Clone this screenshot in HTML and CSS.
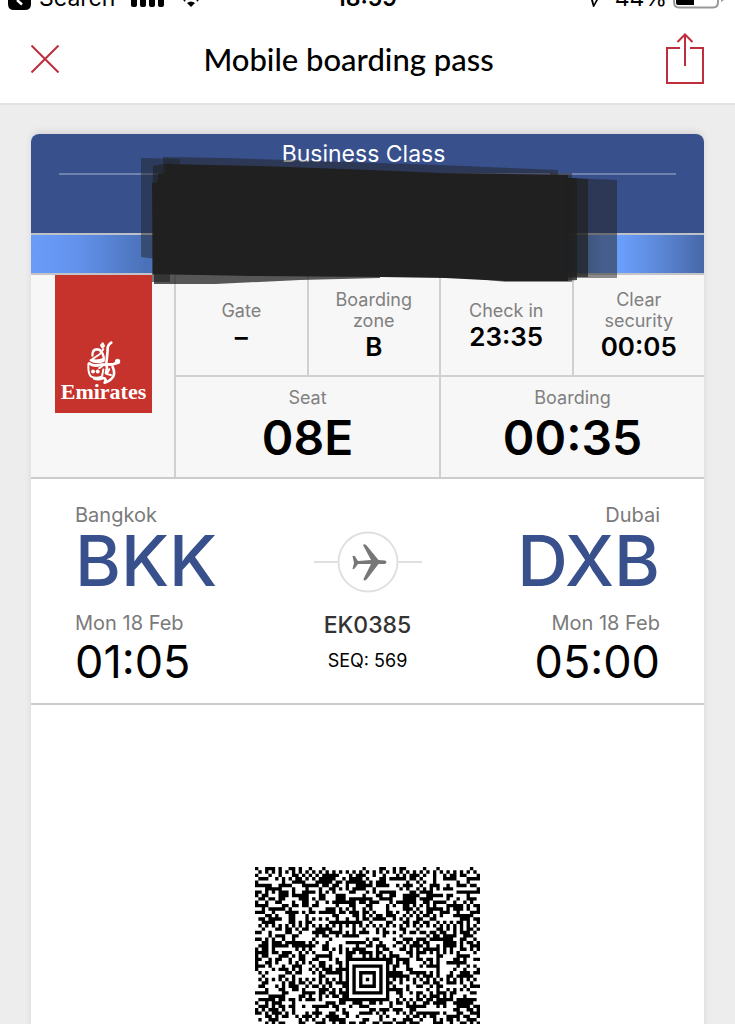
FILE: index.html
```html
<!DOCTYPE html>
<html lang="en">
<head>
  <meta charset="UTF-8" />
  <meta name="viewport" content="width=device-width, initial-scale=1.0"/>
  <title>Mobile boarding pass</title>
  <link rel="stylesheet" href="styles.css">
</head>
<body>
  <div class="app">
    <div class="status">
      <div class="status-left">
        <svg class="back-app" viewBox="0 0 23 12"><path d="M0 0H23V4Q23 10 17 10H6Q0 10 0 4Z"/><path d="M9 0L14 4.500" fill="none" stroke="#fff" stroke-width="2.500"/></svg>
        <span>Search</span>
        <svg class="signal" viewBox="0 0 34 12"><path d="M0 0h6v5q0 2-2 2h-2q-2 0-2-2zM9 0h6v5q0 2-2 2h-2q-2 0-2-2zM18 0h6v5q0 2-2 2h-2q-2 0-2-2zM27 0h6v5q0 2-2 2h-2q-2 0-2-2z"/></svg>
        <svg class="wifi" viewBox="0 0 16 12"><path d="M4 3Q8 0 12 3L8 7Z"/><path d="M1 1L2 0M15 1L14 0" stroke="#000" stroke-width="2"/></svg>
      </div>
      <div class="status-time"><span>18:59</span></div>
      <div class="status-right">
        <svg class="location" viewBox="0 0 8 12"><path d="M0 0H2L3 4L5 0H7L3 7H2Z"/></svg>
        <span>44%</span>
        <svg class="battery" viewBox="0 0 52 12"><path d="M1 0V2Q1 7.500 6 7.500H40Q45 7.500 45 2V0" fill="none" stroke="#999" stroke-width="2"/><path d="M3 0H21V5H5Q3 5 3 3Z"/><path d="M48 0H51L48 2Z" fill="#999"/></svg>
      </div>
    </div>

    <header class="topbar">
      <button class="icon-btn" aria-label="Close">
        <svg width="28" height="28" viewBox="0 0 28 28"><path d="M.5 .5L27.500 27.500M27.500 .5L.5 27.500"/></svg>
      </button>
      <h1>Mobile boarding pass</h1>
      <button class="icon-btn" aria-label="Share">
        <svg width="38" height="52" viewBox="0 0 38 52"><path d="M14 15H1V50H37V15H24M19 33V2M11.500 9L19 1.500L26.500 9"/></svg>
      </button>
    </header>

    <main class="content">
      <div class="pass">
        <div class="pass-top">
          <div class="cabin">Business Class</div>
          <!-- Passenger name hidden -->
          <svg class="scribble" viewBox="141 157 477 128">
            <path opacity=".45" d="M141 158L180 159V262L141 257Z"/>
            <path opacity=".5" d="M163 157L225 158L440 165L558 170V260H163Z"/>
            <path opacity=".6" d="M153 166L170 163V282H152Z"/>
            <path d="M152 183L158 182V174L165 173V164L260 166L370 170L440 173L568 175V281L505 281L445 278L380 277L250 276L153 274Z"/>
            <path opacity=".75" d="M154 272H380V278L300 280L215 284H154Z"/>
            <path opacity=".5" d="M550 173H572V282H505L470 278H550Z"/>
            <path opacity=".8" d="M565 178H577V280L565 281Z"/>
            <path opacity=".7" d="M565 178L588 179V277H565Z"/>
            <path opacity=".5" d="M568 178L617 180V278H568Z"/>
          </svg>
        </div>
        <div class="stripe"></div>

        <div class="details">
          <div class="logo-cell">
            <div class="logo">
              <svg width="34" height="43" viewBox="128 30 102 130">
                <g fill="none" stroke="#fff" stroke-linecap="round" stroke-linejoin="round">
                  <path stroke-width="8" d="M201 35Q188 43 190 58L187 89Q185 98 188 111L185 127"/>
                  <path stroke-width="6" d="M175 37L179 45L174 50L170 43ZM177 55L166 70L142 86Q155 92 178 84"/>
                  <path stroke-width="7" d="M144 74Q143 56 158 55Q172 55 178 78L178 90Q155 98 139 88"/>
                  <path stroke-width="9" d="M135 98Q146 108 169 102L207 100Q216 98 223 92"/>
                  <path stroke-width="6" d="M132 98Q130 127 139 137Q155 145 173 137L177 116"/>
                  <path stroke-width="8" d="M205 108Q213 126 207 137Q199 151 181 156Q188 142 176 142Q161 148 149 143"/>
                  <path stroke-width="6" d="M174 105Q169 111 164 112M195 115L188 130L200 133"/>
                </g>
                <g fill="#fff"><circle cx="146" cy="122" r="6"/><circle cx="160" cy="122" r="6"/><circle cx="220" cy="92" r="8"/></g>
              </svg>
              <span>Emirates</span>
            </div>
          </div>
          <div class="cells">
            <div class="row row-small">
              <div class="cell"><span class="label">Gate</span><strong>–</strong></div>
              <div class="cell"><span class="label">Boarding zone</span><strong>B</strong></div>
              <div class="cell"><span class="label">Check in</span><strong>23:35</strong></div>
              <div class="cell"><span class="label">Clear security</span><strong>00:05</strong></div>
            </div>
            <div class="row row-big">
              <div class="cell"><span class="label">Seat</span><strong>08E</strong></div>
              <div class="cell"><span class="label">Boarding</span><strong>00:35</strong></div>
            </div>
          </div>
        </div>

        <div class="flight">
          <div class="airport">
            <div class="city">Bangkok</div>
            <div class="code">BKK</div>
            <div class="date">Mon 18 Feb</div>
            <div class="time">01:05</div>
          </div>
          <div class="route">
            <svg width="108" height="62" viewBox="0 0 108 62">
              <path d="M0 31H24M84 31H108" stroke="#e0e0e0" stroke-width="2"/>
              <circle cx="54" cy="31" r="29.500" fill="#fff" stroke="#e0e0e0" stroke-width="2"/>
              <path fill="#777" d="M38.500 25Q41 24 42 27L44 30L57 29L49 14Q51 12 53 15L64.500 29L71 29.500Q74 31 71 33L64.500 33L53 48Q50 51 49.500 48L57 33L44 33L41 37Q39 39 38.500 38L40 32Z"/>
            </svg>
            <div class="number">EK0385</div>
            <div class="seq">SEQ: 569</div>
          </div>
          <div class="airport airport-to">
            <div class="city">Dubai</div>
            <div class="code">DXB</div>
            <div class="date">Mon 18 Feb</div>
            <div class="time">05:00</div>
          </div>
        </div>

        <div class="barcode">
          <svg id="aztec" viewBox="0 0 67 67" role="img" aria-label="Boarding pass code"></svg>
        </div>
      </div>
    </main>
  </div>

  <script src="script.js"></script>
</body>
</html>
```
FILE: styles.css
```css
* {
  box-sizing: border-box;
}

body {
  margin: 0;
  font-family: Inter, "Liberation Sans", sans-serif;
  color: #000;
  background: #ededed;
}

.app {
  height: 100vh;
  overflow: hidden;
}

/* Status bar, scrolled partly out of view */
.status {
  display: grid;
  grid-template-columns: 1fr auto 1fr;
  grid-template-rows: 12px;
  height: 12px;
  padding: 0 10px 0 8px;
  overflow: hidden;
  background: #fff;
  font-size: 23px;
  line-height: 20px;
}

.status-left,
.status-time,
.status-right {
  display: flex;
  align-items: flex-end;
}

.status-left {
  gap: 8px;
}

.status-right {
  justify-content: flex-end;
  gap: 6px;
}

.status span {
  margin-bottom: 4px;
}

.status svg {
  height: 12px;
  flex: none;
}

.back-app { width: 23px; }
.signal { width: 34px; margin-left: 8px; }
.wifi { width: 16px; margin-left: 10px; }
.location { width: 8px; margin-right: 10px; }
.battery { width: 52px; }

.status-time {
  font-weight: 600;
}

.topbar {
  display: flex;
  align-items: center;
  justify-content: space-between;
  height: 93px;
  padding: 3px 31px 0;
  background: #fff;
  border-bottom: 2px solid #e2e2e2;
}

.topbar h1 {
  margin: 0 28px 0 0;
  font-family: Lato, sans-serif;
  font-size: 31px;
  font-weight: 500;
  line-height: 40px;
}

.icon-btn {
  display: flex;
  padding: 0;
  border: none;
  background: none;
  cursor: pointer;
}

.icon-btn path {
  fill: none;
  stroke: #be2e3d;
  stroke-width: 2;
}

.content {
  padding: 29px 31px 0;
}

.pass {
  background: #fff;
  border-radius: 8px 8px 0 0;
  box-shadow: 0 -3px 8px -2px rgba(0, 0, 0, 0.15);
}

.pass-top {
  position: relative;
  height: 101px;
  padding: 0 28px;
  background: #38508c;
  border-bottom: 2px solid #bfc1c8;
  border-radius: 8px 8px 0 0;
}

.cabin {
  height: 41px;
  padding-right: 8px;
  border-bottom: 2px solid #7083b0;
  color: #fff;
  font-size: 23px;
  line-height: 41px;
  text-align: center;
}

.scribble {
  position: absolute;
  top: 23px;
  left: 110px;
  width: 477px;
  height: 128px;
  fill: #202020;
}

.stripe {
  height: 40px;
  background: linear-gradient(90deg, #6a9df9 0%, #6392ec 7%, #4b72b8 17%, #38508c 50%, #4b72b8 80%, #6a9df9 85%, #6a9df9 88%, #5d89da 93%, #4768a8 100%);
  border-bottom: 2px solid #c3c4c8;
}

.details {
  display: flex;
  background: #f7f7f7;
  border-bottom: 2px solid #ccc;
}

.logo-cell {
  width: 145px;
  padding-left: 24px;
  border-right: 2px solid #d0d0d0;
}

.logo {
  display: flex;
  flex-direction: column;
  align-items: center;
  width: 97px;
  height: 138px;
  padding-top: 66px;
  background: #c6322c;
  color: #fff;
  font-family: "Liberation Serif", serif;
  font-size: 22px;
  font-weight: bold;
  line-height: 16px;
}

.cells {
  flex: 1;
}

.row {
  display: flex;
}

.row-small {
  height: 102px;
  border-bottom: 2px solid #d0d0d0;
}

.row-big {
  height: 100px;
}

.cell {
  display: flex;
  flex: 1;
  flex-direction: column;
  align-items: center;
  justify-content: center;
  text-align: center;
}

.cell + .cell {
  border-left: 2px solid #d0d0d0;
}

.row-small .cell {
  padding: 2px 20px 0;
}

.label {
  color: #808080;
  font-size: 18px;
  line-height: 21px;
}

.row-small strong {
  font-size: 26px;
  font-weight: 600;
  line-height: 32px;
}

.row-big strong {
  font-size: 48px;
  font-weight: 600;
  line-height: 60px;
}

.flight {
  display: flex;
  justify-content: space-between;
  padding: 24px 44px 14px;
  border-bottom: 2px solid #ccc;
}

.airport,
.route {
  flex: 1;
}

.airport-to {
  text-align: right;
}

.city,
.date {
  color: #7a7a7a;
  font-size: 20px;
  line-height: 24px;
}

.code {
  margin-bottom: 16px;
  color: #38508c;
  font-size: 70px;
  font-weight: 500;
  line-height: 68px;
}

.time {
  font-size: 45px;
  line-height: 54px;
}

.route {
  display: flex;
  flex-direction: column;
  align-items: center;
  padding-top: 28px;
}

.number {
  margin-top: 16px;
  color: #333;
  font-size: 23px;
  font-weight: 500;
  line-height: 32px;
}

.seq {
  margin-top: 8px;
  font-size: 18px;
  line-height: 24px;
}

.barcode {
  display: flex;
  justify-content: center;
  padding: 162px 0 60px;
}

.barcode svg {
  width: 225px;
  height: 225px;
}
```
FILE: script.js
```js
// Draws the Aztec symbol: bullseye, reference grid, data modules
const size = 67;
const mid = 33;
let seed = 385569;

function nextBit() {
  seed = (seed * 1103515245 + 12345) % 2147483648;
  return (seed >> 16) & 1;
}

let d = '';
for (let y = 0; y < size; y++) {
  for (let x = 0; x < size; x++) {
    const dx = Math.abs(x - mid);
    const dy = Math.abs(y - mid);
    const ring = Math.max(dx, dy);
    let dark = nextBit();
    if (ring <= 6) {
      dark = ring % 2 === 0;
    } else if (dx % 16 === 0 || dy % 16 === 0) {
      dark = (dx + dy) % 2 === 0;
    }
    if (dark) d += `M${x} ${y}h1v1h-1z`;
  }
}

const path = document.createElementNS('http://www.w3.org/2000/svg', 'path');
path.setAttribute('d', d);
document.getElementById('aztec').appendChild(path);
```
